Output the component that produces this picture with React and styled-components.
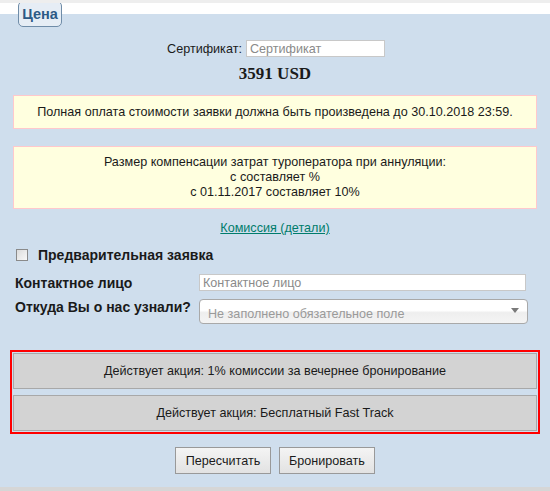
import React from 'react';
import styled, { createGlobalStyle } from 'styled-components';

const GlobalStyle = createGlobalStyle`
  html, body {
    margin: 0;
    padding: 0;
    background: #ffffff;
  }
  body {
    font-family: "Liberation Sans", Arial, sans-serif;
    font-size: 12.6px;
    color: #1a1a1a;
  }
`;

const Page = styled.div`
  width: 550px;
  height: 491px;
  overflow: hidden;
  background: #ffffff;
  border-top: 3px solid #eeeeee;
  box-sizing: border-box;
`;

const Fieldset = styled.div`
  position: relative;
  margin-top: 11px;
  background: #cfdeed;
  height: 477px;
  padding: 24px 10px 0 10px;
  box-sizing: border-box;
  border-bottom: 4px solid #d6d6d6;
`;

const Legend = styled.div`
  position: absolute;
  left: 18px;
  top: -13px;
  width: 44px;
  height: 26px;
  box-sizing: border-box;
  border: 1px solid #6f8ca8;
  border-radius: 5px;
  background: #e6edf5;
  color: #2c5a86;
  font-weight: bold;
  font-size: 14.5px;
  display: flex;
  align-items: center;
  justify-content: center;
`;

const CertRow = styled.div`
  display: flex;
  justify-content: center;
  align-items: center;
  gap: 4px;
  margin-left: 2px;
  margin-top: 2px;
`;

const TextInput = styled.input`
  width: ${({ $w }) => $w}px;
  height: 17px;
  box-sizing: border-box;
  border: 1px solid #c8c8c8;
  background: #ffffff;
  font-family: inherit;
  font-size: 12.6px;
  padding: 0 3px;
  outline: none;
  &::placeholder {
    color: #8a8a8a;
  }
`;

const Price = styled.div`
  text-align: center;
  font-family: "Liberation Serif", "Times New Roman", serif;
  font-weight: bold;
  font-size: 17px;
  margin-top: 6px;
  height: 22px;
  line-height: 22px;
`;

const Notice = styled.div`
  margin: ${({ $mt }) => $mt}px 3px 0 3px;
  background: #ffffdf;
  border: 1px solid #ffc8cc;
  text-align: center;
  padding: ${({ $pad }) => $pad};
  line-height: ${({ $lh }) => $lh}px;
`;

const LinkRow = styled.div`
  text-align: center;
  margin-top: 12px;
  a {
    color: #007c6c;
    text-decoration: underline;
  }
`;

const CheckRow = styled.label`
  display: flex;
  align-items: center;
  gap: 10px;
  margin: 12px 0 0 6px;
  font-weight: bold;
  font-size: 14px;
`;

const Check = styled.span`
  width: 12px;
  height: 12px;
  box-sizing: border-box;
  border: 1px solid #8a8a8a;
  background: linear-gradient(135deg, #dcdcdc, #f8f8f8);
`;

const FormRow = styled.div`
  display: flex;
  align-items: ${({ $top }) => ($top ? 'flex-start' : 'center')};
  margin: ${({ $mt }) => $mt}px 0 0 5px;
`;

const Label = styled.div`
  width: 184px;
  font-weight: bold;
  font-size: 14px;
`;

const Select = styled.div`
  width: 329px;
  height: 25px;
  box-sizing: border-box;
  border: 1px solid #a9a9a9;
  border-radius: 4px;
  background: linear-gradient(#ffffff 0%, #ffffff 45%, #eeeeee 55%, #f4f4f4 100%);
  display: flex;
  align-items: center;
  justify-content: space-between;
  padding: 4px 8px 0 8px;
  color: #9a9a9a;
  font-size: 12.6px;
`;

const Arrow = styled.span`
  width: 0;
  height: 0;
  border-left: 4px solid transparent;
  border-right: 4px solid transparent;
  border-top: 5px solid #7a7a7a;
  margin-top: -6px;
`;

const PromoBox = styled.div`
  margin-top: 26px;
  border: 2px solid #ff0000;
  padding: 1px;
  display: flex;
  flex-direction: column;
  gap: 6px;
`;

const Promo = styled.div`
  height: 36px;
  box-sizing: border-box;
  background: #d3d3d3;
  border: 1px solid #a8a8a8;
  display: flex;
  align-items: center;
  justify-content: center;
`;

const Buttons = styled.div`
  display: flex;
  justify-content: center;
  gap: 8px;
  margin-top: 13px;
`;

const Button = styled.button`
  width: 96px;
  height: 27px;
  border: 1px solid #999999;
  background: linear-gradient(#f4f4f4, #e2e2e2);
  font-family: inherit;
  font-size: 12.6px;
  color: #1a1a1a;
  padding: 0;
`;

export default function App() {
  return (
    <>
      <GlobalStyle />
      <Page>
        <Fieldset>
          <Legend>Цена</Legend>
          <CertRow>
            <span>Сертификат:</span>
            <TextInput $w={139} placeholder="Сертификат" />
          </CertRow>
          <Price>3591 USD</Price>
          <Notice $mt={10} $pad="8px 4px" $lh={16}>
            Полная оплата стоимости заявки должна быть произведена до 30.10.2018 23:59.
          </Notice>
          <Notice $mt={17} $pad="8px 4px 8px" $lh={15}>
            Размер компенсации затрат туроператора при аннуляции:
            <br />с составляет %
            <br />с 01.11.2017 составляет 10%
          </Notice>
          <LinkRow>
            <a href="#">Комиссия (детали)</a>
          </LinkRow>
          <CheckRow>
            <Check />
            Предварительная заявка
          </CheckRow>
          <FormRow $mt={11}>
            <Label>Контактное лицо</Label>
            <TextInput $w={327} placeholder="Контактное лицо" />
          </FormRow>
          <FormRow $mt={8} $top>
            <Label>Откуда Вы о нас узнали?</Label>
            <Select>
              <span>Не заполнено обязательное поле</span>
              <Arrow />
            </Select>
          </FormRow>
          <PromoBox>
            <Promo>Действует акция: 1% комиссии за вечернее бронирование</Promo>
            <Promo>Действует акция: Бесплатный Fast Track</Promo>
          </PromoBox>
          <Buttons>
            <Button>Пересчитать</Button>
            <Button>Бронировать</Button>
          </Buttons>
        </Fieldset>
      </Page>
    </>
  );
}
